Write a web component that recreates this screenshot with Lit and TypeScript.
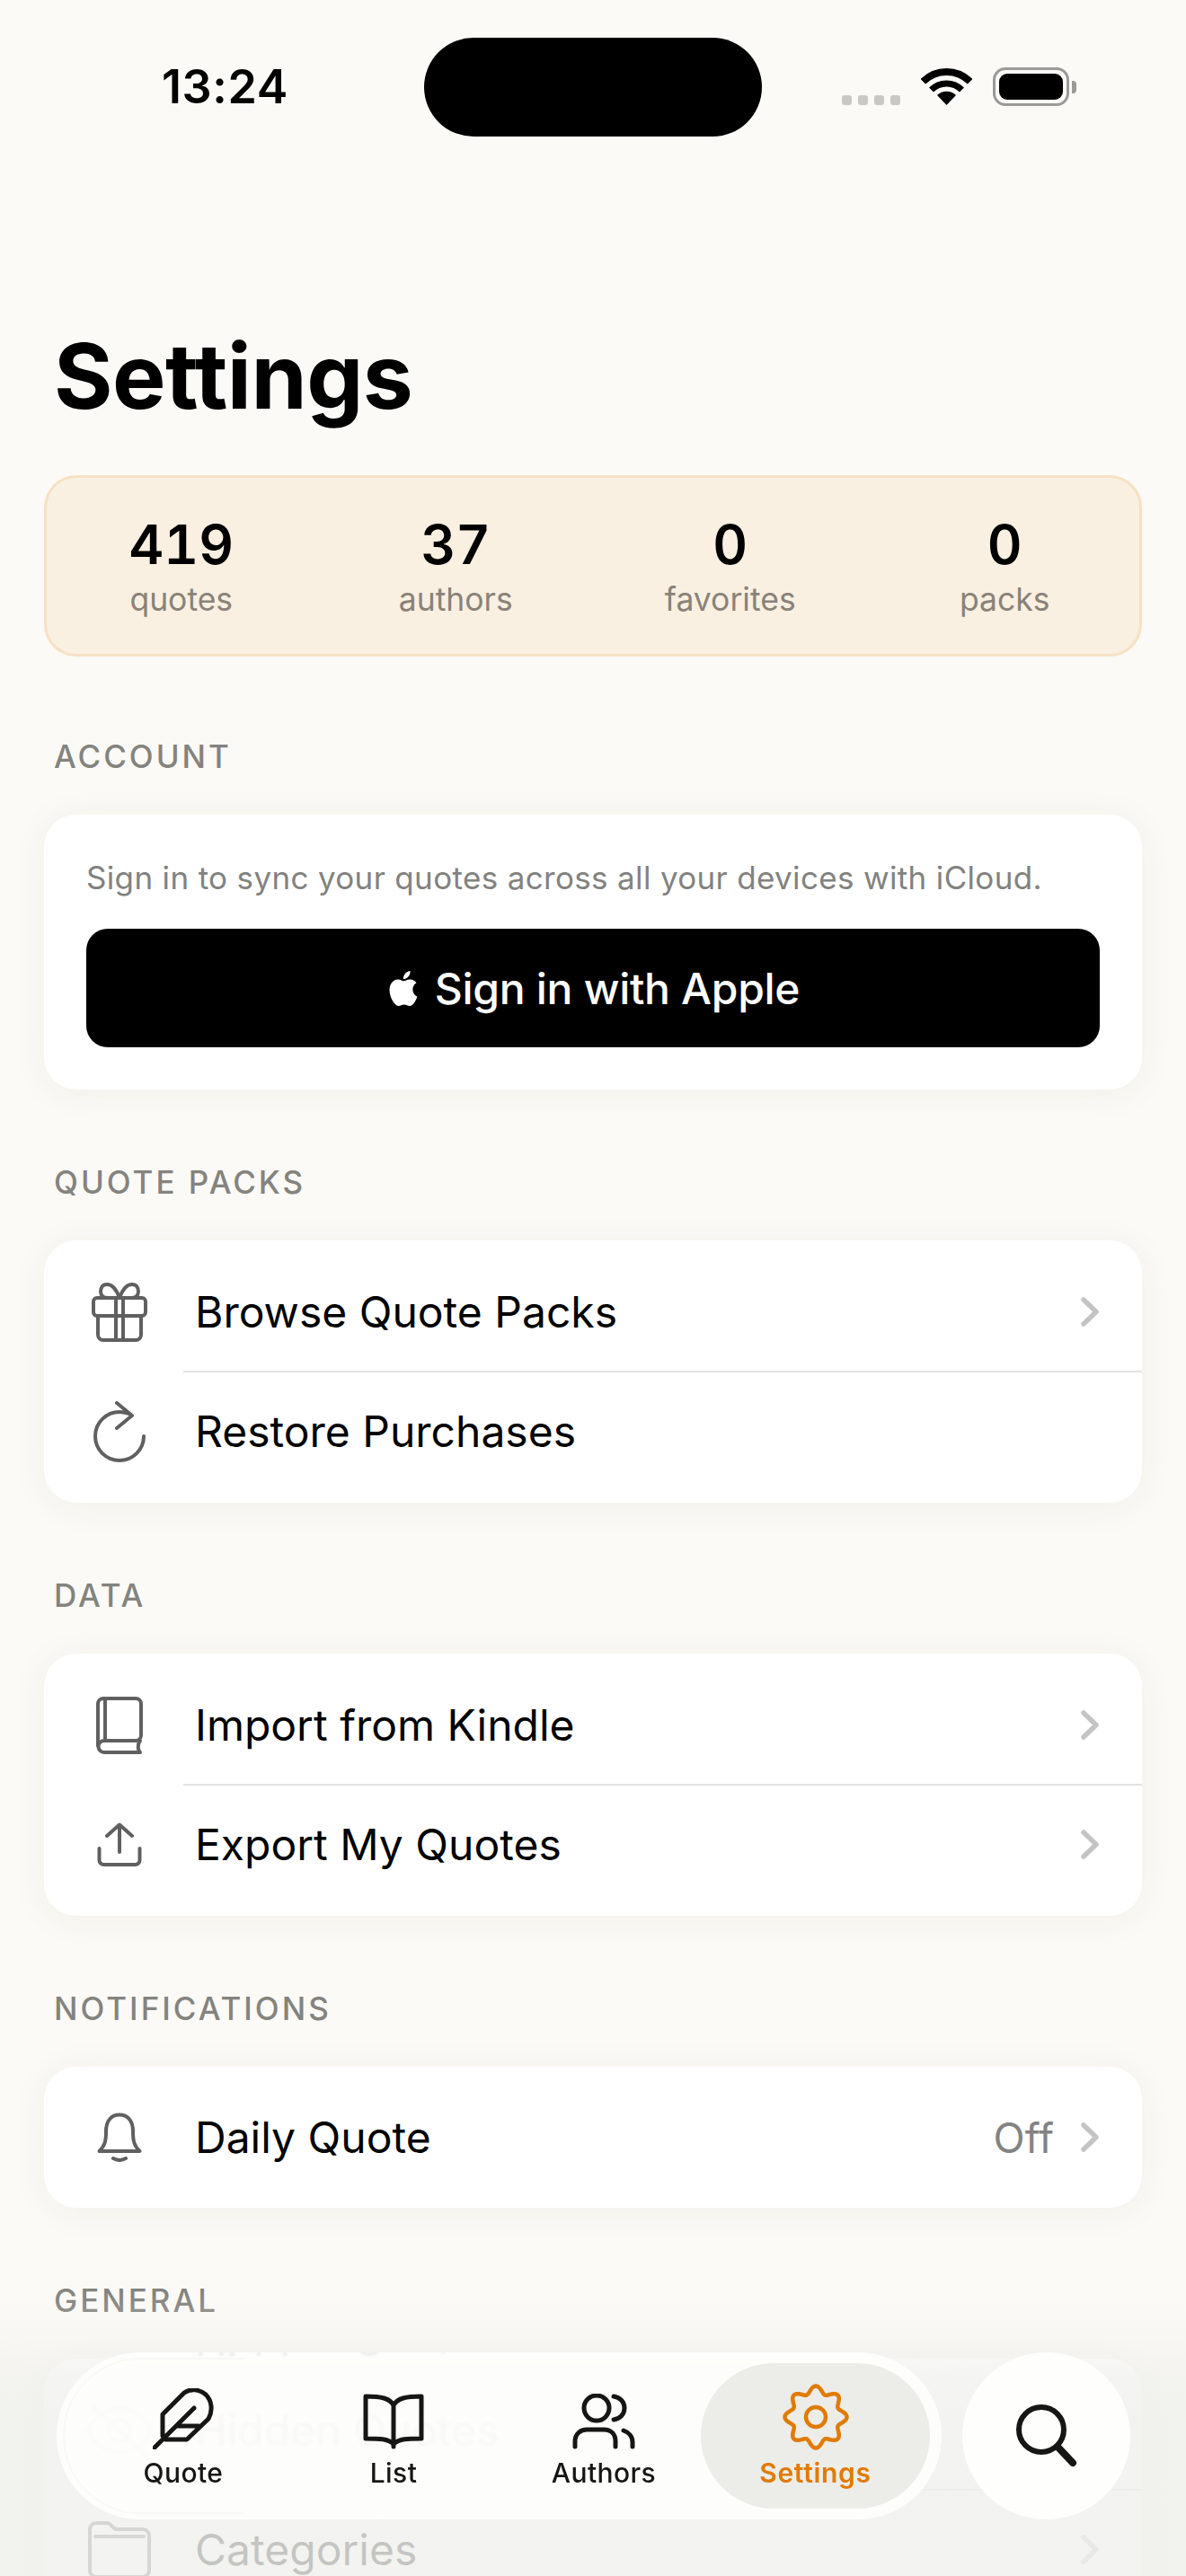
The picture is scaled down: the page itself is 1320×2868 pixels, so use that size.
import { LitElement, html, css, svg } from "lit";
import { customElement } from "lit/decorators.js";

const gearPath = (() => {
  const pts: string[] = [];
  const n = 160;
  for (let i = 0; i < n; i++) {
    const t = (i / n) * Math.PI * 2;
    const r = 30.5 + 4 * Math.cos(8 * t);
    pts.push(`${(37 + r * Math.sin(t)).toFixed(2)} ${(37 - r * Math.cos(t)).toFixed(2)}`);
  }
  return "M" + pts.join("L") + "Z";
})();

const chevron = html`<svg class="chev" width="20" height="33" viewBox="0 0 20 33"><path d="M3 3 L17 16.5 L3 30" /></svg>`;
const icons = {
  gift: html`<svg class="ico" width="62" height="66" viewBox="0 0 62 66"><rect x="2" y="17" width="58" height="20" rx="4"/><path d="M7 37 V58 a6 6 0 0 0 6 6 H49 a6 6 0 0 0 6 -6 V37 M27 17 V64 M35 17 V64 M31 17 C27 6 22 2 17 2 C12 2 10 6 10 10 C10 14 13 17 18 17 H44 C49 17 52 14 52 10 C52 6 50 2 45 2 C40 2 35 6 31 17"/></svg>`,
  restore: html`<svg class="ico" width="58" height="68" viewBox="0 0 58 68"><path d="M56 39 A27 27 0 1 1 29 12 C33 12 37 13 42 15 M26 2 L43 16 L26 30"/></svg>`,
  book: html`<svg class="ico" width="54" height="66" viewBox="0 0 54 66"><path d="M3 56 V9 a6 6 0 0 1 6 -6 H45 a6 6 0 0 1 6 6 V44 a6 6 0 0 1 -6 6 H10 a6.500 6.500 0 0 0 0 13 H50 M50 63 C47 60 47 54 50 50 M11 3 V50"/></svg>`,
  share: html`<svg class="ico" width="50" height="50" viewBox="0 0 50 50"><path d="M2.500 29 V42 a5 5 0 0 0 5 5 H42.500 a5 5 0 0 0 5 -5 V29 M25 3 V33 M11 15 L25 2.500 L39 15"/></svg>`,
  bell: html`<svg class="ico" width="50" height="55" viewBox="0 0 50 55"><path d="M2.500 43 C9 37 10 31 10 21 C10 9 16 2.500 25 2.500 C34 2.500 40 9 40 21 C40 31 41 37 47.500 43 Z M18 51 Q25 55 32 51"/></svg>`,
  eye: html`<svg class="ico" width="78" height="58" viewBox="0 0 78 58"><path d="M3 29 C14 10 26 5 39 5 C52 5 64 10 75 29 C64 48 52 53 39 53 C26 53 14 48 3 29 Z M10 3 L68 56"/><circle cx="39" cy="29" r="12"/></svg>`,
  folder: html`<svg class="ico" width="72" height="66" viewBox="0 0 72 66"><path d="M3 10 a7 7 0 0 1 7 -7 H22 C27 3 28 10 33 10 H62 a7 7 0 0 1 7 7 V56 a7 7 0 0 1 -7 7 H10 a7 7 0 0 1 -7 -7 Z M9 18 H63"/></svg>`,
};

@customElement("app-root")
export class AppRoot extends LitElement {
  static styles = css`
    :host { display: block; width: 1320px; height: 2868px; font-family: Inter, "Liberation Sans", sans-serif; }
    * { box-sizing: border-box; }
    .page { position: relative; width: 1320px; height: 2868px; overflow: hidden; background: #fbfaf6; color: #000; padding: 0 49px; }

    .status { height: 186px; position: relative; margin: 0 -49px; }
    .time { position: absolute; left: 180px; top: 65px; font-size: 52px; line-height: 64px; font-weight: 600; letter-spacing: .6px; }
    .island { position: absolute; left: 472px; top: 42px; width: 376px; height: 110px; border-radius: 55px; background: #000; }
    .dots { position: absolute; left: 937px; top: 106px; display: flex; gap: 7px; }
    .dots i { width: 11px; height: 11px; border-radius: 3px; background: #c9c8c4; }
    .wifi { position: absolute; left: 1025px; top: 75px; }
    .batt { position: absolute; left: 1105px; top: 75px; width: 85px; height: 43px; border: 3px solid #9a9a98; border-radius: 14px; padding: 4px; }
    .batt i { display: block; height: 100%; border-radius: 9px; background: #000; }
    .cap { position: absolute; left: 1193px; top: 90px; width: 5px; height: 14px; border-radius: 0 4px 4px 0; background: #9a9a98; }

    .title-wrap { height: 343px; padding-top: 180px; }
    h1 { margin: 0 0 0 11px; height: 106px; font-size: 100px; line-height: 106px; font-weight: 700; letter-spacing: -.5px; }

    .stats { height: 202px; display: grid; grid-template-columns: repeat(4, 1fr); background: #f9f0e2; box-shadow: inset 0 0 0 3px #f6e1c4; border-radius: 36px; }
    .stat { display: flex; flex-direction: column; align-items: center; padding-top: 41px; }
    .num { font-size: 60px; line-height: 72px; font-weight: 600; font-feature-settings: "tnum"; }
    .lab { font-size: 35.500px; line-height: 44px; color: #8a8278; margin-top: 4px; }

    .section { margin-top: 81px; }
    .section.first { margin-top: 89px; }
    .sec-label { margin: 0 0 43px 11px; font-size: 35px; line-height: 44px; font-weight: 500; letter-spacing: 3px; color: #84837e; }

    .card { background: #fff; border-radius: 36px; box-shadow: 0 4px 40px rgba(60,50,30,.055); padding: 13px 0; }
    .account { height: 306px; padding: 47px 47px 0; }
    .note { font-size: 35px; line-height: 46px; letter-spacing: .34px; color: #82827f; white-space: nowrap; }
    .apple { margin-top: 34px; height: 132px; border-radius: 24px; background: #000; color: #fff; display: flex; align-items: center; justify-content: center; gap: 16px; font-size: 48px; font-weight: 500; letter-spacing: -.3px; }

    .row { position: relative; height: 133px; display: flex; align-items: center; }
    .row.solo { height: 131px; }
    .row + .row::before { content: ""; position: absolute; left: 155px; right: 0; top: -1px; height: 2px; background: #e3e3e1; }
    .icon { width: 168px; display: flex; justify-content: center; flex: none; }
    .ico { fill: none; stroke: #606060; stroke-width: 4; stroke-linecap: round; stroke-linejoin: round; display: block; }
    .row-text { flex: 1; font-size: 48px; line-height: 60px; }
    .val { font-size: 46px; color: #838383; margin-right: 30px; }
    .chev { fill: none; stroke: #c4c4c4; stroke-width: 5.500; stroke-linecap: round; stroke-linejoin: round; margin-right: 48px; flex: none; }

    .fade { position: absolute; left: 0; right: 0; top: 2552px; bottom: 0; background: linear-gradient(to bottom, rgba(240,240,237,0) 0, rgba(240,240,237,.25) 45px, rgba(240,240,237,.72) 95px, rgba(240,240,237,.82) 140px); }

    .bar { position: absolute; left: 63px; top: 2619px; width: 985px; height: 186px; border-radius: 93px; background: rgba(254,254,252,.9); backdrop-filter: blur(1.500px); overflow: hidden; display: flex; padding-top: 12px; padding-left: 24px; }
    .bar::before { content: ""; position: absolute; left: 7px; top: 6px; bottom: 6px; width: 200px; border-radius: 86px 0 0 86px; border: 2px solid rgba(0,0,0,.018); border-right: 0; }
    .mirror { position: absolute; left: 154px; font-size: 48px; line-height: 60px; color: #000; opacity: .06; filter: blur(1px); transform: scaleY(-1); white-space: nowrap; }
    .mirror.t { top: -44px; }
    .mirror.b { bottom: -50px; }
    .tab { position: relative; width: 234px; height: 162px; display: flex; flex-direction: column; align-items: center; flex: none; color: #161614; }
    .tab .tico { height: 96px; display: flex; align-items: flex-end; }
    .tab svg { fill: none; stroke: #161614; stroke-width: 5; stroke-linecap: round; stroke-linejoin: round; display: block; }
    .tab span { font-size: 30px; line-height: 38px; font-weight: 500; letter-spacing: .4px; margin-top: 7px; }
    .tab.on { width: 255px; margin-left: -9px; border-radius: 81px; background: #ecece9; color: #e07b00; }
    .tab.on .tico { align-items: flex-start; padding-top: 23px; }
    .tab.on svg { stroke: #e07b00; stroke-width: 4.500; }
    .tab.on span { font-weight: 600; color: #e07b00; letter-spacing: .7px; }
    .search { position: absolute; left: 1071px; top: 2619px; width: 187px; height: 186px; border-radius: 50%; background: #fefefc; display: flex; align-items: center; justify-content: center; }
    .search svg { fill: none; stroke: #161614; stroke-linecap: round; display: block; }
  `;

  private row(icon: unknown, text: string, opts: { chev?: boolean; val?: string; solo?: boolean } = {}) {
    return html`<div class="row ${opts.solo ? "solo" : ""}">
      <div class="icon">${icon}</div>
      <div class="row-text">${text}</div>
      ${opts.val ? html`<div class="val">${opts.val}</div>` : ""}
      ${opts.chev ? chevron : ""}
    </div>`;
  }

  render() {
    return html`<div class="page">
      <div class="status">
        <div class="time">13:24</div>
        <div class="island"></div>
        <div class="dots"><i></i><i></i><i></i><i></i></div>
        <svg class="wifi" width="57" height="42" viewBox="0 0 57 42">
          <path d="M28.500 42 L18 31 A15 15 0 0 1 39 31 Z" fill="#000"/>
          <path d="M11.500 25 A24 24 0 0 1 45.500 25" fill="none" stroke="#000" stroke-width="7"/>
          <path d="M2.300 15.800 A37 37 0 0 1 54.700 15.800" fill="none" stroke="#000" stroke-width="8"/>
        </svg>
        <div class="batt"><i></i></div>
        <div class="cap"></div>
      </div>
      <div class="title-wrap"><h1>Settings</h1></div>
      <div class="stats">
        ${[["419", "quotes"], ["37", "authors"], ["0", "favorites"], ["0", "packs"]].map(
          ([n, l]) => html`<div class="stat"><div class="num">${n}</div><div class="lab">${l}</div></div>`
        )}
      </div>

      <div class="section first">
        <div class="sec-label">ACCOUNT</div>
        <div class="card account">
          <div class="note">Sign in to sync your quotes across all your devices with iCloud.</div>
          <div class="apple">
            <svg width="38" height="39" viewBox="0 0 24 24" preserveAspectRatio="none" fill="#fff"><path d="M12.152 6.896c-.948 0-2.415-1.078-3.96-1.04-2.04.027-3.91 1.183-4.961 3.014-2.117 3.675-.546 9.103 1.519 12.09 1.013 1.454 2.208 3.09 3.792 3.039 1.52-.065 2.09-.987 3.935-.987 1.831 0 2.35.987 3.96.948 1.637-.026 2.676-1.48 3.676-2.948 1.156-1.688 1.636-3.325 1.662-3.415-.039-.013-3.182-1.221-3.22-4.857-.026-3.04 2.48-4.494 2.597-4.559-1.429-2.09-3.623-2.324-4.39-2.376-2-.156-3.675 1.09-4.61 1.09zM15.53 3.83c.843-1.012 1.4-2.427 1.245-3.83-1.207.052-2.662.805-3.532 1.818-.78.896-1.454 2.338-1.273 3.714 1.338.104 2.715-.688 3.559-1.701"/></svg>
            <span>Sign in with Apple</span>
          </div>
        </div>
      </div>

      <div class="section">
        <div class="sec-label">QUOTE PACKS</div>
        <div class="card">
          ${this.row(icons.gift, "Browse Quote Packs", { chev: true })}
          ${this.row(icons.restore, "Restore Purchases")}
        </div>
      </div>

      <div class="section">
        <div class="sec-label">DATA</div>
        <div class="card">
          ${this.row(icons.book, "Import from Kindle", { chev: true })}
          ${this.row(icons.share, "Export My Quotes", { chev: true })}
        </div>
      </div>

      <div class="section">
        <div class="sec-label">NOTIFICATIONS</div>
        <div class="card">
          ${this.row(icons.bell, "Daily Quote", { chev: true, val: "Off", solo: true })}
        </div>
      </div>

      <div class="section">
        <div class="sec-label">GENERAL</div>
        <div class="card">
          ${this.row(icons.eye, "Hidden Quotes", { chev: true })}
          ${this.row(icons.folder, "Categories", { chev: true })}
        </div>
      </div>

      <div class="fade"></div>

      <div class="bar">
        <div class="mirror t">Hidden Quotes</div>
        <div class="mirror b">Hidden Quotes</div>
        <div class="tab">
          <div class="tico"><svg width="68" height="68" viewBox="0 0 68 68"><path d="M11 53 V29 L35 5 C42 0 52 1 59 7 C66 14 67 25 62 34 L38 57 H14 Z M2 66 L46 22 M27 42 H51"/></svg></div>
          <span>Quote</span>
        </div>
        <div class="tab">
          <div class="tico"><svg width="68" height="62" viewBox="0 0 68 62"><path d="M34 13 C30 5 20 3 3 3 V50 C18 50 28 50 34 56 C40 50 50 50 65 50 V3 C48 3 38 5 34 13 V59"/></svg></div>
          <span>List</span>
        </div>
        <div class="tab">
          <div class="tico"><svg width="70" height="62" viewBox="0 0 70 62"><circle cx="27" cy="16" r="14"/><path d="M46 3 C53 4 58 9 58 16 C58 23 53 28 46 29 M3 59 V53 C3 45 9 40 16 40 H35 C43 40 48 45 48 53 V59 M57 41 C63 43 67 48 67 54 V59"/></svg></div>
          <span>Authors</span>
        </div>
        <div class="tab on">
          <div class="tico"><svg width="74" height="74" viewBox="0 0 74 74">${svg`<path d=${gearPath}/><circle cx="37" cy="37" r="11"/>`}</svg></div>
          <span>Settings</span>
        </div>
      </div>
      <div class="search">
        <svg width="70" height="70" viewBox="0 0 70 70"><circle cx="29" cy="28" r="25" stroke-width="6"/><path d="M47 47 L64 65" stroke-width="8"/></svg>
      </div>
    </div>`;
  }
}
